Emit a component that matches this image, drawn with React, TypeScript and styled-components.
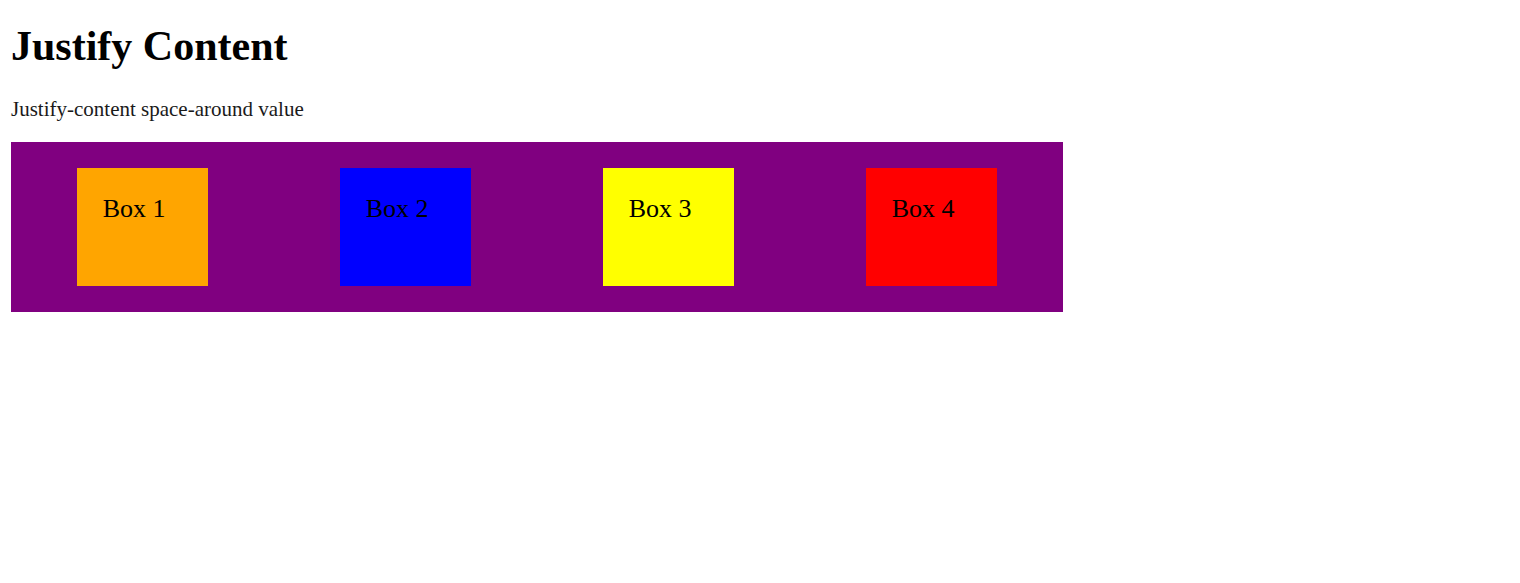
import React from "react";
import styled, { createGlobalStyle } from "styled-components";

const Global = createGlobalStyle`
  html, body { margin: 0; padding: 0; background: #fff; }
  body { font-family: "Liberation Serif", "Times New Roman", serif; color: #000; }
`;

const Page = styled.div`
  padding: 0 11px;
`;

const Title = styled.h1`
  margin: 22px 0 27px;
  font-size: 42px;
  line-height: 48px;
  font-weight: bold;
`;

const Lead = styled.p`
  margin: 0 0 21px;
  font-size: 21px;
  line-height: 24px;
  color: #1a1a1a;
`;

const Flex = styled.div`
  width: 1052px;
  height: 170px;
  box-sizing: border-box;
  padding: 26px 0;
  background: #800080;
  display: flex;
  justify-content: space-around;
`;

const Box = styled.div<{ $bg: string }>`
  width: 131.5px;
  height: 118px;
  box-sizing: border-box;
  padding: 25px 26px;
  background: ${(p) => p.$bg};
  font-size: 26px;
  line-height: 32px;
  white-space: nowrap;
`;

const boxes = [
  { label: "Box 1", bg: "#ffa500" },
  { label: "Box 2", bg: "#0000ff" },
  { label: "Box 3", bg: "#ffff00" },
  { label: "Box 4", bg: "#ff0000" },
];

export default function App() {
  return (
    <>
      <Global />
      <Page>
        <Title>Justify Content</Title>
        <Lead>Justify-content space-around value</Lead>
        <Flex>
          {boxes.map((b) => (
            <Box key={b.label} $bg={b.bg}>
              {b.label}
            </Box>
          ))}
        </Flex>
      </Page>
    </>
  );
}
